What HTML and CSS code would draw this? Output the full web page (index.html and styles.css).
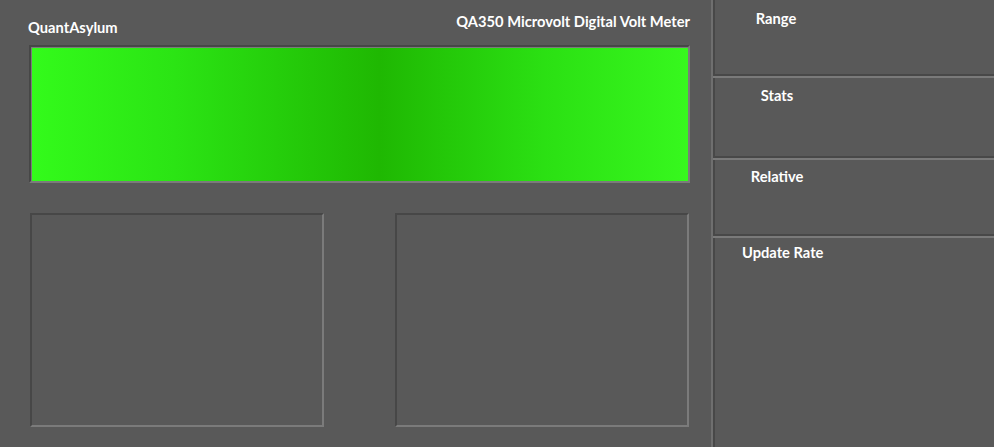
FILE: index.html
```html
<!DOCTYPE html>
<html>
<head>
<meta charset="utf-8">
<link rel="stylesheet" href="styles.css">
</head>
<body>
<div class="app">
  <div class="main">
    <div class="header">
      <div class="brand">QuantAsylum</div>
      <div class="title">QA350 Microvolt Digital Volt Meter</div>
    </div>
    <div class="display"></div>
    <div class="panes">
      <div class="pane"></div>
      <div class="pane"></div>
    </div>
  </div>
  <div class="side">
    <div class="group g-range"><div class="label">Range</div></div>
    <div class="group g-stats"><div class="label">Stats</div></div>
    <div class="group g-rel"><div class="label">Relative</div></div>
    <div class="group g-rate last"><div class="label">Update Rate</div></div>
  </div>
</div>
</body>
</html>
```
FILE: styles.css
```css
html, body {
  margin: 0;
  padding: 0;
  background: #595959;
  height: 100%;
  overflow: hidden;
}
body {
  font-family: "Lato", "Open Sans", sans-serif;
  font-weight: 700;
  font-size: 14.7px;
  color: #ffffff;
}
.app {
  display: flex;
  height: 447px;
}
.main {
  width: 711px;
  box-sizing: border-box;
  padding-left: 29px;
  padding-right: 22px;
  display: flex;
  flex-direction: column;
}
.header {
  height: 45px;
  display: flex;
  justify-content: space-between;
  align-items: flex-start;
  line-height: 17px;
}
.brand {
  margin-top: 19px;
  margin-left: -1px;
}
.title {
  margin-top: 13px;
  margin-right: -1px;
}
.display {
  height: 138px;
  margin-right: -1px;
  box-sizing: border-box;
  border-style: solid;
  border-width: 2px;
  border-color: #474747 #7b7b7b #7b7b7b #474747;
  box-shadow: inset 1px 1px 0 #7b7b7b;
  background: linear-gradient(to right,
    #33fb1b 0%,
    #2be414 22%,
    #1fb802 53%,
    #2be013 78%,
    #37f81e 100%);
}
.panes {
  margin-top: 30px;
  display: flex;
  justify-content: space-between;
  padding-left: 1px;
}
.pane {
  width: 294px;
  height: 214px;
  box-sizing: border-box;
  border-style: solid;
  border-width: 2px;
  border-color: #474747 #7b7b7b #7b7b7b #474747;
}
.side {
  flex: 1;
  display: flex;
  flex-direction: column;
  border-left: 2px solid #6f6f6f;
  box-shadow: inset 2px 0 0 #484848;
}
.group {
  border-bottom: 2px solid #7a7a7a;
  box-shadow: inset 0 -2px 0 #484848;
  box-sizing: border-box;
  line-height: 17px;
}
.label {
  width: 128px;
  text-align: center;
}
.g-range { height: 78px; }
.g-range .label { margin-top: 10px; width: 126px; }
.g-stats { height: 82px; }
.g-stats .label { margin-top: 9px; }
.g-rel { height: 78px; }
.g-rel .label { margin-top: 8px; }
.g-rate { flex: 1; border-bottom: none; box-shadow: none; }
.g-rate .label { margin-top: 6px; width: auto; padding-left: 29px; text-align: left; }
```
